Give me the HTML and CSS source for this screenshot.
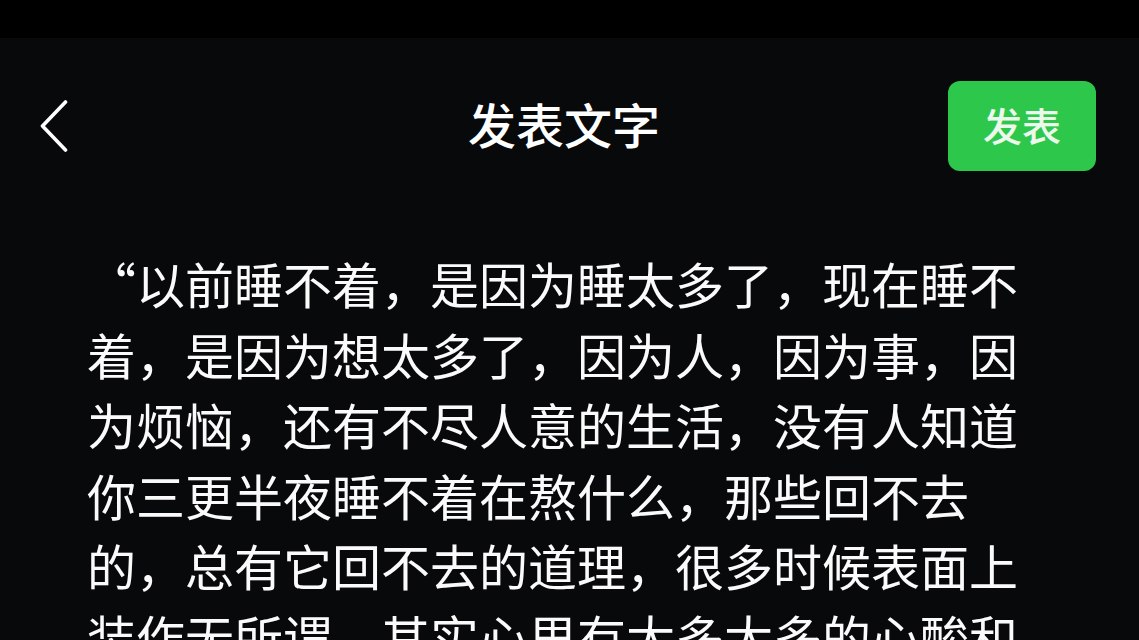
FILE: index.html
```html
<!DOCTYPE html>
<html lang="zh-CN">
<head>
<meta charset="utf-8">
<title>发表文字</title>
<link rel="stylesheet" href="styles.css">
</head>
<body>
<div class="statusbar"></div>
<header class="topbar">
  <div class="left">
    <svg class="back" width="28" height="52" viewBox="0 0 28 52" aria-hidden="true">
      <polyline points="25.5,2 2.5,26 25.5,50" fill="none" stroke="#ffffff" stroke-width="3.6" stroke-linecap="round" stroke-linejoin="round"/>
    </svg>
  </div>
  <h1 class="title">发表文字</h1>
  <div class="right">
    <button class="publish">发表</button>
  </div>
</header>
<main class="content">
  <p class="text"><span class="quote">“</span>以前睡不着，是因为睡太多了，现在睡不着，是因为想太多了，因为人，因为事，因为烦恼，还有不尽人意的生活，没有人知道你三更半夜睡不着在熬什么，那些回不去的，总有它回不去的道理，很多时候表面上装作无所谓，其实心里有太多太多的心酸和委屈</p>
</main>
</body>
</html>
```

FILE: styles.css
```css
html, body {
  margin: 0;
  padding: 0;
}
body {
  background: #08090b;
  width: 1139px;
  height: 640px;
  overflow: hidden;
  font-family: "Noto Sans CJK SC", "Noto Sans", sans-serif;
  color: #ffffff;
}
.statusbar {
  height: 38px;
  background: #000000;
}
.topbar {
  height: 176px;
  display: grid;
  grid-template-columns: 1fr auto 1fr;
  align-items: center;
}
.left {
  padding-left: 40px;
  display: flex;
  align-items: center;
}
.back {
  display: block;
}
.title {
  margin: 0 11px 0 0;
  padding-bottom: 6px;
  font-size: 48px;
  font-weight: 500;
  line-height: 1;
  color: #ffffff;
}
.right {
  display: flex;
  justify-content: flex-end;
  padding-right: 43px;
}
.publish {
  width: 148px;
  height: 90px;
  border: none;
  border-radius: 12px;
  background: #2dc84b;
  color: #ecf8ec;
  font-family: "Noto Sans CJK SC", sans-serif;
  font-size: 39px;
  font-weight: 500;
  padding: 0 0 5px 0;
}
.content {
  padding-left: 87px;
  padding-top: 34px;
}
.text {
  margin: 0;
  width: 935px;
  font-size: 49px;
  line-height: 70.5px;
  color: #fafafa;
}
.quote {
  font-feature-settings: "fwid" 1;
}
```
